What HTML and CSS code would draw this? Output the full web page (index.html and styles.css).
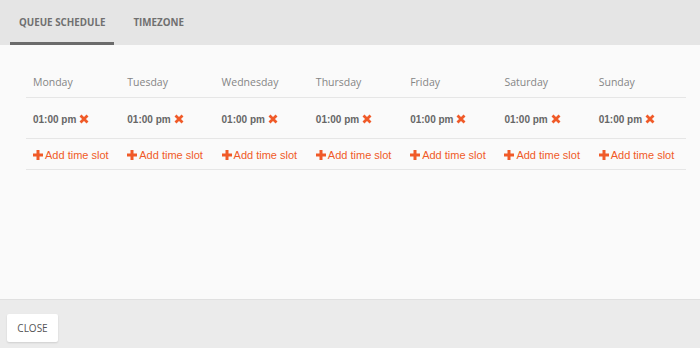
FILE: index.html
```html
<!DOCTYPE html>
<html lang="en">
  <head>
    <meta name="viewport" content="width=device-width" />
    <title>Queue Schedule</title>
    <link rel="stylesheet" href="styles.css">
  </head>
  <body>
    <div class="dialog">
      <nav class="tabs">
        <a class="tab active">Queue Schedule</a>
        <a class="tab">Timezone</a>
      </nav>

      <section class="content">
        <table class="schedule">
          <thead>
            <tr>
              <th>Monday</th>
              <th>Tuesday</th>
              <th>Wednesday</th>
              <th>Thursday</th>
              <th>Friday</th>
              <th>Saturday</th>
              <th>Sunday</th>
            </tr>
          </thead>
          <tbody>
            <tr class="slots">
              <td><span class="time">01:00 pm</span><span class="remove"><svg viewBox="0 0 10 10"><path d="M1.5 1.5 8.5 8.5M8.5 1.5 1.5 8.5"/></svg></span></td>
              <td><span class="time">01:00 pm</span><span class="remove"><svg viewBox="0 0 10 10"><path d="M1.5 1.5 8.5 8.5M8.5 1.5 1.5 8.5"/></svg></span></td>
              <td><span class="time">01:00 pm</span><span class="remove"><svg viewBox="0 0 10 10"><path d="M1.5 1.5 8.5 8.5M8.5 1.5 1.5 8.5"/></svg></span></td>
              <td><span class="time">01:00 pm</span><span class="remove"><svg viewBox="0 0 10 10"><path d="M1.5 1.5 8.5 8.5M8.5 1.5 1.5 8.5"/></svg></span></td>
              <td><span class="time">01:00 pm</span><span class="remove"><svg viewBox="0 0 10 10"><path d="M1.5 1.5 8.5 8.5M8.5 1.5 1.5 8.5"/></svg></span></td>
              <td><span class="time">01:00 pm</span><span class="remove"><svg viewBox="0 0 10 10"><path d="M1.5 1.5 8.5 8.5M8.5 1.5 1.5 8.5"/></svg></span></td>
              <td><span class="time">01:00 pm</span><span class="remove"><svg viewBox="0 0 10 10"><path d="M1.5 1.5 8.5 8.5M8.5 1.5 1.5 8.5"/></svg></span></td>
            </tr>
            <tr class="add">
              <td><a class="add-slot"><svg viewBox="0 0 10 10"><path d="M5 0V10M0 5H10"/></svg>Add time slot</a></td>
              <td><a class="add-slot"><svg viewBox="0 0 10 10"><path d="M5 0V10M0 5H10"/></svg>Add time slot</a></td>
              <td><a class="add-slot"><svg viewBox="0 0 10 10"><path d="M5 0V10M0 5H10"/></svg>Add time slot</a></td>
              <td><a class="add-slot"><svg viewBox="0 0 10 10"><path d="M5 0V10M0 5H10"/></svg>Add time slot</a></td>
              <td><a class="add-slot"><svg viewBox="0 0 10 10"><path d="M5 0V10M0 5H10"/></svg>Add time slot</a></td>
              <td><a class="add-slot"><svg viewBox="0 0 10 10"><path d="M5 0V10M0 5H10"/></svg>Add time slot</a></td>
              <td><a class="add-slot"><svg viewBox="0 0 10 10"><path d="M5 0V10M0 5H10"/></svg>Add time slot</a></td>
            </tr>
          </tbody>
        </table>
      </section>

      <footer class="actions">
        <button class="btn-close">Close</button>
      </footer>
    </div>
  </body>
</html>
```

FILE: styles.css
```css
html, body {
  margin: 0;
  padding: 0;
}

body {
  width: 700px;
  height: 348px;
  overflow: hidden;
  background: #fafafa;
  font-family: "Liberation Sans", Arial, sans-serif;
}

.dialog {
  display: flex;
  flex-direction: column;
  height: 348px;
}

/* top tab bar */
.tabs {
  display: flex;
  height: 45px;
  padding-left: 10px;
  background: #e5e5e5;
  box-sizing: border-box;
}

.tab {
  display: flex;
  align-items: center;
  padding: 3px 9px 0;
  margin-right: 10px;
  font-family: "Open Sans", sans-serif;
  font-size: 9.8px;
  font-weight: 700;
  text-transform: uppercase;
  color: #707070;
  border-bottom: 3px solid transparent;
}

.tab.active {
  border-bottom-color: #6b6b6b;
}

/* schedule table */
.content {
  flex: 1;
  padding: 21px 14px 0 26px;
  background: #fafafa;
}

.schedule {
  width: 660px;
  border-collapse: collapse;
  table-layout: fixed;
}

.schedule th,
.schedule td {
  text-align: left;
  padding: 0 0 0 7px;
  border-bottom: 1px solid #e6e6e6;
  vertical-align: middle;
}

.schedule th {
  height: 31px;
  font-family: "Open Sans", sans-serif;
  font-size: 10.5px;
  font-weight: 400;
  color: #858585;
}

.slots td {
  height: 40px;
}

.add td {
  height: 29px;
  padding-top: 1px;
}

.time {
  font-size: 10px;
  font-weight: 700;
  color: #666;
}

.remove {
  display: inline-block;
  vertical-align: -1px;
  margin-left: 3px;
}

.remove svg {
  display: block;
  width: 10px;
  height: 10px;
  stroke: #f05a28;
  stroke-width: 2.8;
  fill: none;
}

.add-slot {
  display: inline-flex;
  align-items: center;
  font-size: 11px;
  color: #f05a28;
}

.add-slot svg {
  width: 10px;
  height: 10px;
  margin-right: 2px;
  stroke: #f05a28;
  stroke-width: 3;
  fill: none;
}

/* footer */
.actions {
  height: 49px;
  box-sizing: border-box;
  padding: 14px 7px 0;
  background: #ebebeb;
  border-top: 1px solid #e0e0e0;
}

.btn-close {
  width: 51px;
  height: 28px;
  padding: 0;
  border: none;
  border-radius: 2px;
  background: #fff;
  box-shadow: 0 1px 2px rgba(0, 0, 0, 0.12);
  font-family: "Open Sans", sans-serif;
  font-size: 10px;
  font-weight: 400;
  text-transform: uppercase;
  color: #555;
}
```
